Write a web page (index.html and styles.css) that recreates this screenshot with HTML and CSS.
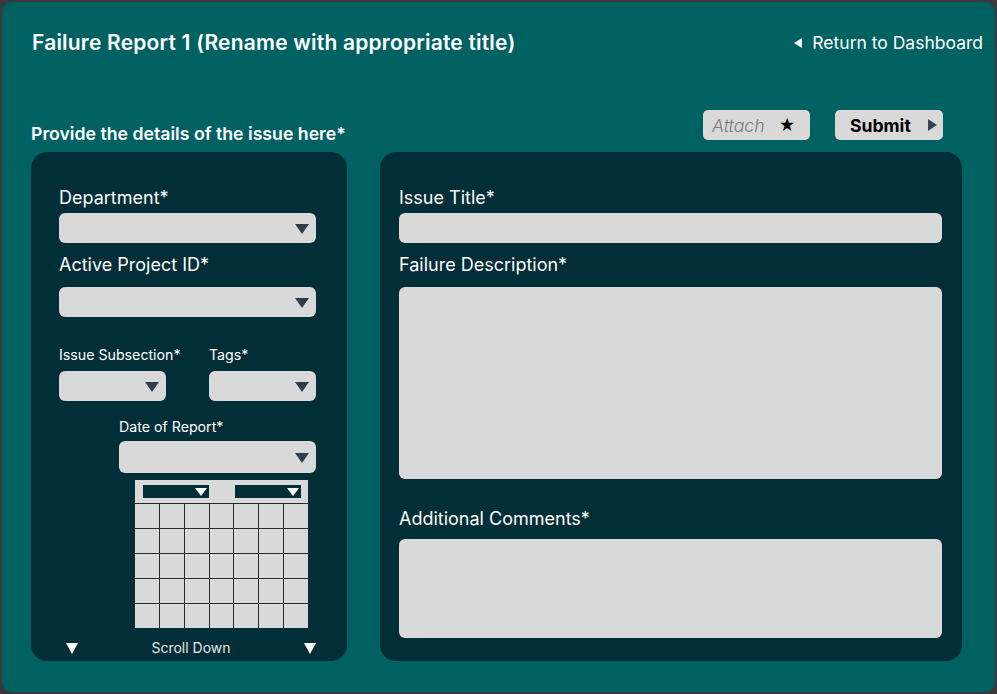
FILE: index.html
```html
<!DOCTYPE html>
<html lang="en">
<head>
<meta charset="utf-8">
<title>Failure Report</title>
<link rel="stylesheet" href="styles.css">
</head>
<body>
<div class="card">
  <header class="header">
    <h1 class="title">Failure Report 1 (Rename with appropriate title)</h1>
    <a class="back" href="#"><span class="tri-left"></span>Return to Dashboard</a>
  </header>

  <div class="toolbar">
    <div class="section-label">Provide the details of the issue here*</div>
    <div class="actions">
      <button class="btn btn-attach"><span class="attach-text">Attach</span><span class="star">★</span></button>
      <button class="btn btn-submit"><span>Submit</span><span class="tri-right"></span></button>
    </div>
  </div>

  <div class="panels">
    <section class="panel panel-left">
      <label class="lbl lbl-dept">Department*</label>
      <div class="select"><span class="arrow"></span></div>
      <label class="lbl lbl-proj">Active Project ID*</label>
      <div class="select"><span class="arrow"></span></div>

      <div class="pair">
        <div class="col">
          <label class="lbl-sm">Issue Subsection*</label>
          <div class="select"><span class="arrow"></span></div>
        </div>
        <div class="col">
          <label class="lbl-sm">Tags*</label>
          <div class="select"><span class="arrow"></span></div>
        </div>
      </div>

      <div class="date-col">
        <label class="lbl-sm">Date of Report*</label>
        <div class="select select-date"><span class="arrow"></span></div>
        <div class="calendar">
          <div class="cal-head">
            <div class="cal-pick"><span class="arrow-w"></span></div>
            <div class="cal-pick"><span class="arrow-w"></span></div>
          </div>
          <div class="cal-grid">
            <div></div><div></div><div></div><div></div><div></div><div></div><div></div>
            <div></div><div></div><div></div><div></div><div></div><div></div><div></div>
            <div></div><div></div><div></div><div></div><div></div><div></div><div></div>
            <div></div><div></div><div></div><div></div><div></div><div></div><div></div>
            <div></div><div></div><div></div><div></div><div></div><div></div><div></div>
          </div>
        </div>
      </div>

      <div class="scroll-row">
        <span class="tri-down"></span>
        <span class="scroll-text">Scroll Down</span>
        <span class="tri-down"></span>
      </div>
    </section>

    <section class="panel panel-right">
      <label class="lbl lbl-dept">Issue Title*</label>
      <div class="input"></div>
      <label class="lbl lbl-proj">Failure Description*</label>
      <div class="input area-desc"></div>
      <label class="lbl lbl-comments">Additional Comments*</label>
      <div class="input area-comments"></div>
    </section>
  </div>
</div>
</body>
</html>
```

FILE: styles.css
```css
* { box-sizing: border-box; }

html, body {
  margin: 0;
  padding: 0;
  background: #3a3a3a;
  font-family: Inter, "Noto Sans", "Liberation Sans", sans-serif;
}

.card {
  margin: 2px;
  width: 993px;
  height: 690px;
  background: #006163;
  border-radius: 10px;
  padding: 29px 12px 0 29px;
  color: #ffffff;
}

.header {
  display: flex;
  justify-content: space-between;
  align-items: center;
  height: 24px;
}

.title {
  margin: 0 0 0 1px;
  font-size: 21px;
  font-weight: 600;
  line-height: 24px;
  letter-spacing: 0.2px;
  white-space: nowrap;
}

.back {
  display: flex;
  align-items: center;
  color: #ffffff;
  text-decoration: none;
  font-size: 17.5px;
  line-height: 24px;
  white-space: nowrap;
}

.tri-left {
  width: 0;
  height: 0;
  border-top: 5px solid transparent;
  border-bottom: 5px solid transparent;
  border-right: 8px solid #ffffff;
  margin-right: 10px;
}

.toolbar {
  margin-top: 55px;
  width: 931px;
  height: 34px;
  display: flex;
  justify-content: space-between;
}

.section-label {
  align-self: flex-end;
  font-size: 17.7px;
  font-weight: 600;
  line-height: 20px;
  white-space: nowrap;
}

.actions {
  display: flex;
  gap: 25px;
  margin-right: 19px;
}

.btn {
  height: 30px;
  width: 107px;
  border: none;
  border-radius: 5px;
  background: #d9d9d9;
  display: flex;
  align-items: center;
  font-family: inherit;
  padding: 0;
}

.btn-attach {
  padding-left: 9px;
}

.attach-text {
  font-size: 17.7px;
  font-style: italic;
  font-weight: 300;
  color: #7a7a7a;
}

.star {
  font-size: 16px;
  color: #000000;
  margin-left: 14px;
}

.btn-submit {
  width: 108px;
  padding-left: 15px;
  font-size: 17.6px;
  font-weight: 700;
  color: #000000;
}

.tri-right {
  width: 0;
  height: 0;
  border-top: 6px solid transparent;
  border-bottom: 6px solid transparent;
  border-left: 9px solid #344656;
  margin-left: 17px;
}

.panels {
  margin-top: 8px;
  width: 931px;
  display: flex;
  gap: 33px;
}

.panel {
  height: 509px;
  background: #022e37;
  border-radius: 16px;
  flex-shrink: 0;
}

.panel-left {
  width: 316px;
  padding: 36px 31px 0 28px;
}

.panel-right {
  width: 582px;
  padding: 36px 20px 0 19px;
}

.lbl {
  display: block;
  font-size: 18px;
  line-height: 20px;
  color: #ffffff;
  white-space: nowrap;
}

.lbl-dept { margin-bottom: 5px; }
.lbl-proj { margin-top: 12px; margin-bottom: 12px; }
.lbl-comments { margin-top: 30px; margin-bottom: 10px; }

.lbl-sm {
  display: block;
  font-size: 14.2px;
  line-height: 16px;
  color: #ffffff;
  margin-bottom: 8px;
  white-space: nowrap;
}

.select {
  position: relative;
  height: 30px;
  background: #d9d9d9;
  border-radius: 6px;
}

.arrow {
  position: absolute;
  right: 7px;
  top: 11px;
  width: 0;
  height: 0;
  border-left: 7px solid transparent;
  border-right: 7px solid transparent;
  border-top: 10px solid #2f3e4e;
}

.pair {
  margin-top: 30px;
  display: flex;
  gap: 43px;
}

.pair .col {
  width: 107px;
  flex-shrink: 0;
}

.date-col {
  margin-top: 18px;
  margin-left: 60px;
}

.date-col .lbl-sm {
  margin-bottom: 6px;
}

.select-date {
  height: 32px;
}

.select-date .arrow {
  top: 12px;
}

.calendar {
  margin: 7px 8px 0 16px;
  background: #d9d9d9;
}

.cal-head {
  height: 23px;
  display: flex;
  justify-content: space-between;
  padding: 5px 7px 0 8px;
}

.cal-pick {
  position: relative;
  width: 66px;
  height: 13px;
  background: #022e37;
}

.arrow-w {
  position: absolute;
  right: 2px;
  top: 3px;
  width: 0;
  height: 0;
  border-left: 6px solid transparent;
  border-right: 6px solid transparent;
  border-top: 8px solid #ffffff;
}

.cal-grid {
  display: grid;
  grid-template-columns: repeat(7, 1fr);
  grid-auto-rows: 24px;
  gap: 1px;
  background: #2a2a2a;
  border-top: 1px solid #2a2a2a;
}

.cal-grid div {
  background: #d9d9d9;
}

.scroll-row {
  margin-top: 12px;
  margin-left: 7px;
  width: 250px;
  display: flex;
  justify-content: space-between;
  align-items: center;
  height: 16px;
}

.tri-down {
  width: 0;
  height: 0;
  border-left: 6px solid transparent;
  border-right: 6px solid transparent;
  border-top: 11px solid #ffffff;
}

.scroll-text {
  font-size: 14px;
  line-height: 16px;
  color: #e6e6e6;
}

.input {
  height: 30px;
  background: #d9d9d9;
  border-radius: 6px;
}

.area-desc { height: 192px; }
.area-comments { height: 99px; }
```
